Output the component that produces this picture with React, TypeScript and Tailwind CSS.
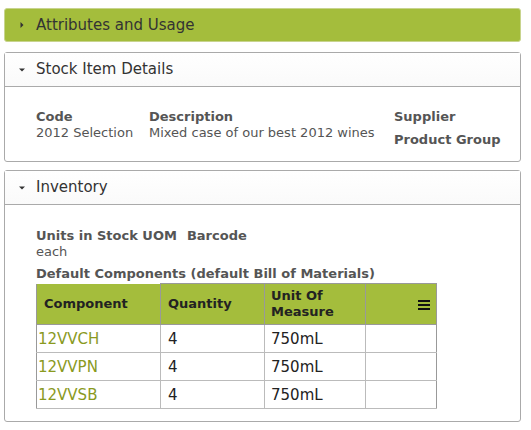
import React from "react";

const font = { fontFamily: '"DejaVu Sans", Verdana, sans-serif' };

function Caret({ down }: { down?: boolean }) {
  return down ? (
    <svg width="8" height="8" viewBox="0 0 8 8" className="mr-[10px]">
      <path d="M1 2.5 L7 2.5 L4 5.5 Z" fill="#333" />
    </svg>
  ) : (
    <svg width="8" height="8" viewBox="0 0 8 8" className="mr-[10px]">
      <path d="M2.5 1 L5.5 4 L2.5 7 Z" fill="#333" />
    </svg>
  );
}

export default function App() {
  const rows = ["12VVCH", "12VVPN", "12VVSB"];
  return (
    <div className="w-[531px] h-[430px] bg-white pt-[8px] pl-[4px]" style={font}>
      <div className="w-[517px] flex flex-col">
        <div className="h-[34px] rounded-[3px] border border-[#c8d48e] bg-[#a4bd3c] flex items-center pl-[13px] text-[15px] text-[#333]">
          <Caret />
          <span>Attributes and Usage</span>
        </div>

        <div className="mt-[10px] rounded-[3px] border border-[#aaa] h-[110px] flex flex-col">
          <div className="h-[34px] border-b border-[#aaa] flex items-center pl-[13px] text-[15px] text-[#333] bg-gradient-to-b from-white to-[#fafafa]">
            <Caret down />
            <span>Stock Item Details</span>
          </div>
          <div className="flex pl-[31px] pt-[22px] text-[13px] text-[#555] leading-[16px]">
            <div className="w-[113px]">
              <div className="font-bold">Code</div>
              <div>2012 Selection</div>
            </div>
            <div className="w-[245px]">
              <div className="font-bold">Description</div>
              <div>Mixed case of our best 2012 wines</div>
            </div>
            <div>
              <div className="font-bold">Supplier</div>
              <div className="font-bold mt-[7px]">Product Group</div>
            </div>
          </div>
        </div>

        <div className="mt-[8px] rounded-[3px] border border-[#aaa] h-[252px] flex flex-col">
          <div className="h-[34px] border-b border-[#aaa] flex items-center pl-[13px] text-[15px] text-[#333] bg-gradient-to-b from-white to-[#fafafa]">
            <Caret down />
            <span>Inventory</span>
          </div>
          <div className="pl-[31px] pt-[23px] text-[13px] text-[#555] leading-[16px]">
            <div className="flex gap-[10px] font-bold">
              <span>Units in Stock UOM</span>
              <span>Barcode</span>
            </div>
            <div>each</div>
            <div className="font-bold mt-[6px]">Default Components (default Bill of Materials)</div>
            <table className="border-collapse mt-[1px] w-[401px]">
              <thead>
                <tr className="bg-[#a4bd3c] text-[#222] h-[41px]">
                  <th className="border border-[#999] border-t-0 text-left font-bold pl-[7px] w-[124px]">Component</th>
                  <th className="border border-[#999] text-left font-bold pl-[7px] w-[104px]">Quantity</th>
                  <th className="border border-[#999] text-left font-bold pl-[6px] w-[101px] leading-[16px]">Unit Of<br />Measure</th>
                  <th className="border border-[#999] text-right pr-[6px]">
                    <svg width="12" height="10" viewBox="0 0 12 10" className="inline-block">
                      <rect x="0" y="0" width="12" height="2" fill="#111" />
                      <rect x="0" y="4" width="12" height="2" fill="#111" />
                      <rect x="0" y="8" width="12" height="2" fill="#111" />
                    </svg>
                  </th>
                </tr>
              </thead>
              <tbody className="text-[15px]">
                {rows.map((r) => (
                  <tr key={r} className="h-[28px]">
                    <td className="border border-[#bbb] border-l-[#999] text-[#8a9a1e] pl-[1px]">{r}</td>
                    <td className="border border-[#bbb] border-l-[#999] text-[#222] pl-[7px]">4</td>
                    <td className="border border-[#bbb] border-l-[#999] text-[#222] pl-[6px]">750mL</td>
                    <td className="border border-[#bbb] border-x-[#999]"></td>
                  </tr>
                ))}
              </tbody>
            </table>
          </div>
        </div>
      </div>
    </div>
  );
}
